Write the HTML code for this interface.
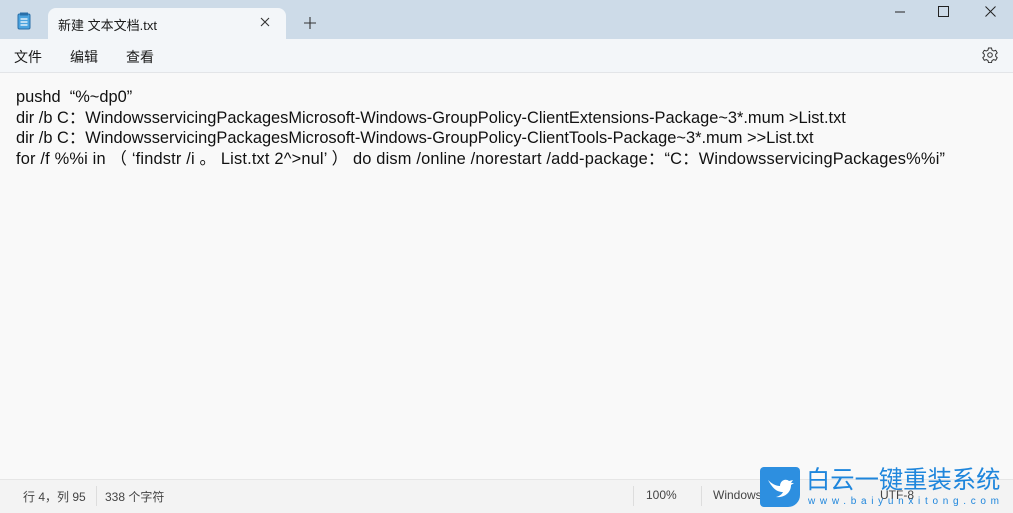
<!DOCTYPE html>
<html><head><meta charset="utf-8"><style>
body{margin:0;width:1013px;height:512px;overflow:hidden;background:#f9f9f9;font-family:"Liberation Sans","Noto Sans CJK SC",sans-serif;position:relative;color:#1a1a1a}
div,span{white-space:nowrap}
.title{position:absolute;left:0;top:0;width:1013px;height:39px;background:#cddbe8}
.tab{position:absolute;left:48px;top:8px;width:238px;height:31px;background:#f3f6f9;border-radius:8px 8px 0 0}
.menu{position:absolute;left:0;top:39px;width:1013px;height:33px;background:#f3f6f9;border-bottom:1px solid #e3e5e8}
.menu span{position:absolute;top:8px;font-size:14px}
.txt{position:absolute;left:16px;top:87px;font-size:16.4px;line-height:20.7px;white-space:pre;color:#111}
.status{position:absolute;left:0;top:479px;width:1013px;height:33px;background:#f3f3f3;border-top:1px solid #e6e6e6;font-size:12px;color:#444}
.status span{position:absolute;top:8px}
.sep{position:absolute;top:6px;width:1px;height:20px;background:#ddd}
</style></head><body>
<div class="title"></div>
<svg style="position:absolute;left:17px;top:12px" width="14" height="18" viewBox="0 0 14 18"><rect x="1" y="2" width="12" height="15" rx="1.5" fill="#4aa3df" stroke="#2a6fa8"/><rect x="3" y="0.5" width="8" height="3" fill="#2a6fa8"/><path d="M3.5 7h7M3.5 10h7M3.5 13h7" stroke="#fff" stroke-width="1.2"/></svg>
<div class="tab"></div>
<div style="position:absolute;left:58px;top:15px;font-size:13px">新建 文本文档.txt</div>
<svg style="position:absolute;left:260px;top:17px" width="10" height="10"><path d="M1 1L9 9M9 1L1 9" stroke="#333" stroke-width="1.1"/></svg>
<svg style="position:absolute;left:304px;top:17px" width="12" height="12"><path d="M6 0V12M0 6H12" stroke="#333" stroke-width="1.1"/></svg>
<svg style="position:absolute;left:895px;top:11px" width="10" height="2"><path d="M0 1H10" stroke="#222"/></svg>
<svg style="position:absolute;left:938px;top:6px" width="11" height="11"><rect x="0.5" y="0.5" width="10" height="10" fill="none" stroke="#222"/></svg>
<svg style="position:absolute;left:985px;top:6px" width="11" height="11"><path d="M0.5 0.5L10.5 10.5M10.5 0.5L0.5 10.5" stroke="#222"/></svg>
<div class="menu"><span style="left:14px">文件</span><span style="left:70px">编辑</span><span style="left:126px">查看</span></div>
<svg style="position:absolute;left:982px;top:47px" width="16" height="16" viewBox="0 0 16 16"><path d="M6.5 1h3l.5 2 1.7 1 2-.7 1.5 2.6-1.5 1.4v2l1.5 1.4-1.5 2.6-2-.7-1.7 1-.5 2h-3l-.5-2-1.7-1-2 .7L.8 10.7l1.5-1.4v-2L.8 5.9l1.5-2.6 2 .7 1.7-1z" fill="none" stroke="#333"/><circle cx="8" cy="8" r="2.3" fill="none" stroke="#333"/></svg>
<div class="txt">pushd  “%~dp0”
dir /b C：WindowsservicingPackagesMicrosoft-Windows-GroupPolicy-ClientExtensions-Package~3*.mum &gt;List.txt
dir /b C：WindowsservicingPackagesMicrosoft-Windows-GroupPolicy-ClientTools-Package~3*.mum &gt;&gt;List.txt
<span style="letter-spacing:0.18px">for /f %%i in （ ‘findstr /i 。 List.txt 2^&gt;nul’ ） do dism /online /norestart /add-package：“C：WindowsservicingPackages%%i”</span></div>
<div class="status"><span style="left:23px">行 4，列 95</span><div class="sep" style="left:96px"></div><span style="left:105px">338 个字符</span><div class="sep" style="left:633px"></div><span style="left:646px">100%</span><div class="sep" style="left:701px"></div><span style="left:713px">Windows</span><span style="left:880px">UTF-8</span></div>
<div style="position:absolute;left:760px;top:467px;width:40px;height:40px;background:#2d8fe0;border-radius:4px 4px 12px 4px"></div>
<svg style="position:absolute;left:766px;top:476px" width="28" height="22" viewBox="0 0 28 22"><path d="M2 4c4 4 8 6 12 6 0-5 5-8 9-5l4-1-2 3 3 0-3 2c0 8-7 13-15 12 4-1 6-3 7-5-6 0-10-3-15-12z" fill="#fff"/></svg>
<div style="position:absolute;left:806px;top:466px;font-size:24.3px;line-height:30px;color:#1f86dc">白云一键重装系统</div>
<div style="position:absolute;left:808px;top:496px;font-size:10px;line-height:12px;color:#1f86dc;letter-spacing:4.7px">www.baiyunxitong.com</div>
</body></html>
